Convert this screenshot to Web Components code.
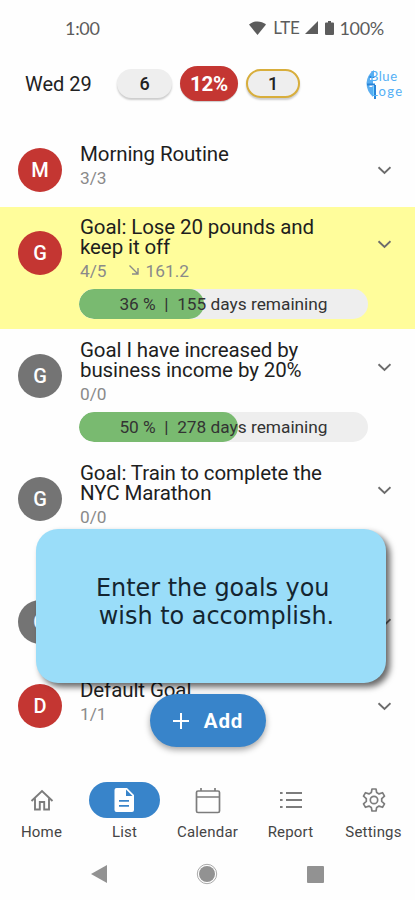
<!DOCTYPE html>
<html lang="en">
<head>
<meta charset="UTF-8">
<meta name="viewport" content="width=device-width, initial-scale=1">
<title>Goals</title>
<style>
    body {
        margin: 0;
        background: #fefefe;
        font-family: Roboto, sans-serif;
        overflow: hidden;
    }
</style>
</head>
<body>
<goal-app></goal-app>

<script>
class StatusBar extends HTMLElement {
    constructor() {
        super();
        this.attachShadow({ mode: 'open' });
    }

    connectedCallback() {
        this.shadowRoot.innerHTML = `
            <style>
                :host {
                    display: flex;
                    align-items: center;
                    height: 55px;
                    padding: 0 31px 0 65px;
                    box-sizing: border-box;
                    color: #5c5c5c;
                    font: 18px/20px Lato, sans-serif;
                }
                .time { letter-spacing: -0.3px; flex: 1; }
                .right { display: flex; align-items: center; }
                svg { display: block; fill: #5c5c5c; }
                .lte { margin: 0 6px 0 7px; font-size: 17px; letter-spacing: -0.3px; }
                .level { margin-left: 5px; letter-spacing: -0.3px; }
                .battery { margin-left: 7px; }
            </style>
            <span class="time">1:00</span>
            <div class="right">
                <svg width="17" height="14" viewBox="0 0 17 14"><path d="M8.500 14L0 3.600C4.800-.7 12.200-.7 17 3.600Z"/></svg>
                <span class="lte">LTE</span>
                <svg width="13" height="13" viewBox="0 0 13 13"><path d="M13 0V13H0Z"/></svg>
                <svg class="battery" width="9" height="14" viewBox="0 0 9 14"><path d="M3 0h3v1.500h2q1 0 1 1V13q0 1-1 1H1q-1 0-1-1V2.500q0-1 1-1h2Z"/></svg>
                <span class="level">100%</span>
            </div>
        `;
    }
}

class StatPill extends HTMLElement {
    constructor() {
        super();
        this.attachShadow({ mode: 'open' });
    }

    connectedCallback() {
        this.shadowRoot.innerHTML = `
            <style>
                :host {
                    display: flex;
                    align-items: center;
                    justify-content: center;
                    box-sizing: border-box;
                    width: 55px;
                    height: 29px;
                    border-radius: 15px;
                    background: #eee;
                    color: #222;
                    font-size: 18px;
                    font-weight: 500;
                    box-shadow: 0 2px 2px rgba(0,0,0,0.2);
                }
                :host([kind="red"]) {
                    width: 58px;
                    height: 35px;
                    border-radius: 18px;
                    background: #c43632;
                    color: white;
                    font-size: 20.500px;
                    font-weight: 700;
                    letter-spacing: -0.2px;
                    box-shadow: 0 1px 1px rgba(0,0,0,0.2);
                }
                :host([kind="gold"]) {
                    width: 54px;
                    border: 2px solid #d8ae3c;
                }
            </style>
            <slot></slot>
        `;
    }
}

class DayHeader extends HTMLElement {
    constructor() {
        super();
        this.attachShadow({ mode: 'open' });
    }

    connectedCallback() {
        this.shadowRoot.innerHTML = `
            <style>
                :host {
                    display: flex;
                    align-items: center;
                    height: 57px;
                    padding: 0 12px 0 25px;
                    box-sizing: border-box;
                    color: #222;
                }
                .date { width: 92px; font-size: 20px; white-space: nowrap; }
                .pills { display: flex; align-items: center; gap: 8px; flex: 1; }
                .logo { display: block; }
            </style>
            <span class="date">Wed 29</span>
            <div class="pills">
                <stat-pill>6</stat-pill>
                <stat-pill kind="red">12%</stat-pill>
                <stat-pill kind="gold">1</stat-pill>
            </div>
            <svg class="logo" width="37" height="34" viewBox="0 0 37 34">
                <path d="M8 3Q1 8 .5 16q0 8 6.500 14V20H3.500v-2H7V13H4v-2h4Z" fill="#5aaef0"/>
                <path d="M9 18v14M1 17.500h8M3.500 10h5" stroke="#2784d8" stroke-width="2"/>
                <g fill="#54aff5" font-family="Lato, sans-serif" font-size="13">
                    <text x="4" y="14" textLength="27">Blue</text>
                    <text x="5" y="28.500" textLength="31">Loge</text>
                </g>
            </svg>
        `;
    }
}

class ProgressPill extends HTMLElement {
    constructor() {
        super();
        this.attachShadow({ mode: 'open' });
    }

    connectedCallback() {
        const fill = this.getAttribute('fill');
        this.shadowRoot.innerHTML = `
            <style>
                :host {
                    display: block;
                    height: 30px;
                    border-radius: 15px;
                    background: #eee;
                    overflow: hidden;
                    color: #333;
                    font-size: 17.300px;
                    line-height: 31px;
                }
                .fill {
                    width: ${fill}px;
                    height: 30px;
                    border-radius: 15px;
                    background: #79ba70;
                }
                .label {
                    margin-top: -30px;
                    position: relative;
                    text-align: center;
                    white-space: pre;
                }
            </style>
            <div class="fill"></div>
            <div class="label"><slot></slot></div>
        `;
    }
}

class GoalRow extends HTMLElement {
    constructor() {
        super();
        this.attachShadow({ mode: 'open' });
    }

    connectedCallback() {
        const trend = this.getAttribute('trend');
        this.shadowRoot.innerHTML = `
            <style>
                :host {
                    display: flex;
                    align-items: flex-start;
                    box-sizing: border-box;
                    height: 123px;
                    padding: 10px 21px 0 18px;
                }
                :host([size="short"]) { height: 73px; }
                :host([size="medium"]) { height: 94px; }
                :host([selected]) {
                    background: linear-gradient(#fffd9b, #fffd9b) 0 0 / 100% 122px no-repeat;
                }
                .avatar {
                    width: 44px;
                    height: 44px;
                    margin: 14px 17px 0 0;
                    border-radius: 50%;
                    background: #747474;
                    color: white;
                    font-size: 20px;
                    font-weight: 500;
                    line-height: 45px;
                    text-align: center;
                }
                :host([active]) .avatar { background: #c43632; }
                :host([size="short"]) .avatar { margin-top: 4px; }
                .body { width: 289px; }
                .title {
                    padding-left: 1px;
                    color: #1e1e1e;
                    font-size: 20.500px;
                    line-height: 20px;
                    letter-spacing: -0.1px;
                    white-space: nowrap;
                }
                .sub {
                    display: flex;
                    align-items: center;
                    padding: 4px 0 0 1px;
                    color: #8a8a8a;
                    font-size: 17.300px;
                    line-height: 20px;
                }
                .trend { display: flex; align-items: center; gap: 7px; margin-left: 22px; }
                .trend svg { margin-top: -2px; }
                ::slotted(progress-pill) { margin-top: 8px; }
                .chevron { display: block; margin: 20px 0 0 9px; width: 14px; }
                :host([size="short"]) .chevron { margin-top: 19px; }
                :host([size="medium"]) .chevron { margin-top: 29px; }
            </style>
            <div class="avatar">${this.getAttribute('letter')}</div>
            <div class="body">
                <div class="title"><slot></slot></div>
                <div class="sub">
                    <span>${this.getAttribute('count') || ''}</span>
                    ${trend ? `<span class="trend"><svg width="10" height="10" viewBox="0 0 10 10" fill="none" stroke="#8a8a8a" stroke-width="1.400"><path d="M.5.5l8 8M9 3V9H3"/></svg>${trend}</span>` : ''}
                </div>
                <slot name="progress"></slot>
            </div>
            <svg class="chevron" width="14" height="14" viewBox="0 0 14 14" fill="none" stroke="#6c6c6c" stroke-width="1.900"><path d="M1.500 4.200l6 5.800 6-5.800"/></svg>
        `;
    }
}

class HintCard extends HTMLElement {
    constructor() {
        super();
        this.attachShadow({ mode: 'open' });
    }

    connectedCallback() {
        this.shadowRoot.innerHTML = `
            <style>
                :host {
                    display: flex;
                    align-items: center;
                    justify-content: center;
                    box-sizing: border-box;
                    width: 350px;
                    height: 154px;
                    padding: 0 0 8px 11px;
                    border-radius: 22px;
                    background: #9addf9;
                    box-shadow: 4px 4px 6px rgba(0,0,0,0.6);
                    color: #142530;
                    font: 23.900px/28px "DejaVu Sans", sans-serif;
                    text-align: center;
                    white-space: pre;
                }
            </style>
            <div><slot></slot></div>
        `;
    }
}

class AddButton extends HTMLElement {
    constructor() {
        super();
        this.attachShadow({ mode: 'open' });
    }

    connectedCallback() {
        this.shadowRoot.innerHTML = `
            <style>
                :host {
                    display: flex;
                    align-items: center;
                    justify-content: center;
                    gap: 15px;
                    width: 116px;
                    height: 53px;
                    border-radius: 27px;
                    background: #3884ca;
                    box-shadow: 0 3px 6px rgba(0,0,0,0.35);
                    color: white;
                    font-size: 20.500px;
                    font-weight: 700;
                    letter-spacing: 0.8px;
                }
            </style>
            <svg width="16" height="16" viewBox="0 0 16 16" stroke="white" stroke-width="2"><path d="M8 0v16M0 8h16"/></svg>
            <slot></slot>
        `;
    }
}

const tabIcons = {
    home: '<path d="M1.500 13L12 3l10.500 10M5 10.500V21.500h4.800V14h4.400v7.500H19V10.500" fill="none" stroke="currentColor" stroke-width="1.900"/>',
    list: '<path fill-rule="evenodd" d="M3.500 0H14l7 7v15q0 2-2 2H3.500q-2 0-2-2V2q0-2 2-2ZM13 1.500V8h6.500ZM6 12v1.800h10V12ZM6 17v1.800h10V17Z" fill="currentColor"/>',
    calendar: '<path d="M2 3h20q1.500 0 1.500 1.500V23q0 1.500-1.500 1.500H2Q.5 24.500.5 23V4.500Q.5 3 2 3ZM.5 9h23M5 0v3M19 0v3" fill="none" stroke="currentColor" stroke-width="1.700"/>',
    report: '<path d="M1 5h2.600M1 12h2.600M1 19h2.600M7 5h16M7 12h16M7 19h16" fill="none" stroke="currentColor" stroke-width="2.200"/>',
    settings: '<g fill="none" stroke="currentColor" stroke-width="1.700" stroke-linejoin="round"><path d="M10 1h4l.7 3.600 2.300 1.300 3.500-1.200 2 3.500-2.800 2.400v2.800l2.800 2.400-2 3.500-3.500-1.200-2.300 1.300L14 23h-4l-.7-3.600L7 18.100l-3.500 1.200-2-3.500 2.800-2.400v-2.800L1.500 8.200l2-3.500L7 5.900l2.300-1.300Z"/><circle cx="12" cy="12" r="3.700"/></g>'
};

class NavTab extends HTMLElement {
    constructor() {
        super();
        this.attachShadow({ mode: 'open' });
    }

    connectedCallback() {
        this.shadowRoot.innerHTML = `
            <style>
                :host {
                    display: flex;
                    flex-direction: column;
                    align-items: center;
                    width: 83px;
                    color: #454545;
                    font-size: 15px;
                    line-height: 20px;
                    letter-spacing: 0.2px;
                }
                .icon {
                    display: flex;
                    align-items: center;
                    justify-content: center;
                    width: 71px;
                    height: 36px;
                    margin-bottom: 4px;
                    border-radius: 18px;
                    color: #7c7c7c;
                }
                :host([current]) .icon { background: #3884ca; color: white; }
                svg { overflow: visible; }
            </style>
            <div class="icon"><svg width="24" height="24" viewBox="0 0 24 24">${tabIcons[this.getAttribute('icon')]}</svg></div>
            <slot></slot>
        `;
    }
}

class SystemNav extends HTMLElement {
    constructor() {
        super();
        this.attachShadow({ mode: 'open' });
    }

    connectedCallback() {
        this.shadowRoot.innerHTML = `
            <style>
                :host {
                    display: flex;
                    align-items: center;
                    justify-content: space-between;
                    height: 52px;
                    padding: 0 91px;
                }
                svg { display: block; }
            </style>
            <svg width="16" height="18" viewBox="0 0 16 18" fill="#929292"><path d="M16 0v18L0 9Z"/></svg>
            <svg width="22" height="22" viewBox="0 0 22 22"><circle cx="11" cy="11" r="8" fill="#929292"/><circle cx="11" cy="11" r="9.700" fill="none" stroke="#aaa"/></svg>
            <svg width="17" height="17" viewBox="0 0 17 17" fill="#929292"><rect width="17" height="17" rx="1"/></svg>
        `;
    }
}

class GoalApp extends HTMLElement {
    constructor() {
        super();
        this.attachShadow({ mode: 'open' });
    }

    connectedCallback() {
        this.shadowRoot.innerHTML = `
            <style>
                :host {
                    display: flex;
                    flex-direction: column;
                    position: relative;
                    height: 900px;
                }
                .list { flex: 1; padding-top: 22px; overflow: hidden; }
                .tabs { display: flex; height: 66px; }
                /* floating layer over the list */
                hint-card { position: absolute; left: 36px; top: 529px; }
                add-button { position: absolute; left: 150px; top: 694px; }
            </style>
            <status-bar></status-bar>
            <day-header></day-header>
            <div class="list">
                <goal-row letter="M" count="3/3" size="short" active>Morning Routine</goal-row>
                <goal-row letter="G" count="4/5" trend="161.2" active selected>Goal: Lose 20 pounds and<br>keep it off<progress-pill slot="progress" fill="125">36 %  |  155 days remaining</progress-pill></goal-row>
                <goal-row letter="G" count="0/0">Goal I have increased by<br>business income by 20%<progress-pill slot="progress" fill="159">50 %  |  278 days remaining</progress-pill></goal-row>
                <goal-row letter="G" count="0/0">Goal: Train to complete the<br>NYC Marathon</goal-row>
                <goal-row letter="G" size="medium"></goal-row>
                <goal-row letter="D" count="1/1" size="short" active>Default Goal</goal-row>
            </div>
            <div class="tabs">
                <nav-tab icon="home">Home</nav-tab>
                <nav-tab icon="list" current>List</nav-tab>
                <nav-tab icon="calendar">Calendar</nav-tab>
                <nav-tab icon="report">Report</nav-tab>
                <nav-tab icon="settings">Settings</nav-tab>
            </div>
            <system-nav></system-nav>
            <hint-card>Enter the goals you <br>wish to accomplish.</hint-card>
            <add-button>Add</add-button>
        `;
    }
}

customElements.define('status-bar', StatusBar);
customElements.define('stat-pill', StatPill);
customElements.define('day-header', DayHeader);
customElements.define('progress-pill', ProgressPill);
customElements.define('goal-row', GoalRow);
customElements.define('hint-card', HintCard);
customElements.define('add-button', AddButton);
customElements.define('nav-tab', NavTab);
customElements.define('system-nav', SystemNav);
customElements.define('goal-app', GoalApp);
</script>
</body>
</html>
